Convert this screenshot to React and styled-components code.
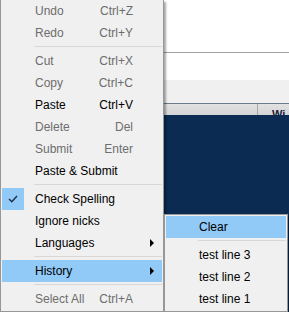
import React from 'react';
import styled, { createGlobalStyle } from 'styled-components';

const Global = createGlobalStyle`
  html, body {
    margin: 0;
    padding: 0;
    width: 289px;
    height: 312px;
    overflow: hidden;
    background: #fff;
  }
`;

// window behind the popup menus
const Window = styled.div`
  position: relative;
  width: 289px;
  height: 312px;
  display: flex;
  flex-direction: column;
  font-family: 'Segoe UI', 'Liberation Sans', Arial, sans-serif;
  font-size: 12px;
  overflow: hidden;
`;

const Pane = styled.div`
  height: ${(p) => p.h}px;
  background: #fff;
  border-bottom: ${(p) => (p.line ? '1px solid #a0a0a0' : 'none')};
  flex-shrink: 0;
`;

const ToolBar = styled.div`
  height: 23px;
  background: #f0f0f0;
  flex-shrink: 0;
`;

const TabStrip = styled.div`
  height: 11px;
  border-top: 1px solid #6c7c8c;
  background: linear-gradient(#e2e2e2, #d4d4d4);
  display: flex;
  justify-content: flex-end;
  overflow: hidden;
  flex-shrink: 0;
`;

const Tab = styled.div`
  width: 32px;
  border-left: 1px solid #a8a8a8;
  padding-left: 14px;
  box-sizing: border-box;
  font-weight: bold;
  font-size: 11px;
  line-height: 20px;
  color: #1a1a3a;
`;

const Content = styled.div`
  flex: 1;
  background: #0b2b52;
`;

// popup menus
const Menu = styled.div`
  position: absolute;
  left: ${(p) => p.x}px;
  top: ${(p) => p.y}px;
  width: ${(p) => p.w}px;
  box-sizing: border-box;
  background: #f0f0f0;
  border: 1px solid #979797;
  border-top: ${(p) => (p.cut ? 'none' : '1px solid #979797')};
  padding: ${(p) => (p.cut ? '0 1px 1px' : '1px')};
  box-shadow: 2px 2px 2px rgba(0, 0, 0, 0.35);
`;

const Item = styled.div`
  height: 22px;
  display: grid;
  grid-template-columns: 22px 1fr auto ${(p) => (p.sub ? '0px' : '29px')};
  align-items: center;
  color: ${(p) => (p.disabled ? '#6d6d6d' : '#000')};
  background: ${(p) => (p.active ? '#91c9f7' : 'transparent')};
  white-space: nowrap;
`;

const CheckCell = styled.div`
  height: 22px;
  display: flex;
  align-items: center;
  justify-content: center;
  background: ${(p) => (p.on ? '#91c9f7' : 'transparent')};
`;

const Label = styled.span`
  padding-left: 11px;
`;

const Shortcut = styled.span`
  text-align: right;
`;

const ArrowCell = styled.div`
  display: flex;
  align-items: center;
  padding-left: 17px;
`;

const Arrow = styled.span`
  width: 0;
  height: 0;
  border-top: 4px solid transparent;
  border-bottom: 4px solid transparent;
  border-left: 4px solid #000;
`;

const Sep = styled.div`
  height: 6px;
  margin-left: 32px;
  display: flex;
  flex-direction: column;

  &::before {
    content: '';
    margin-top: 2px;
    height: 1px;
    background: #d7d7d7;
  }
`;

const Check = () => (
  <svg width="10" height="8" viewBox="0 0 10 8">
    <path d="M1 4 L3.8 6.8 L9 1" fill="none" stroke="#1e2e3e" strokeWidth="1.4" />
  </svg>
);

const MenuItem = ({ label, shortcut, disabled, active, checked, arrow, sub }) => (
  <Item disabled={disabled} active={active} sub={sub}>
    <CheckCell on={checked}>{checked && <Check />}</CheckCell>
    <Label>{label}</Label>
    <Shortcut>{shortcut}</Shortcut>
    {!sub && <ArrowCell>{arrow && <Arrow />}</ArrowCell>}
  </Item>
);

export default function App() {
  return (
    <>
      <Global />
      <Window>
        <Pane h={52} line />
        <Pane h={27} />
        <ToolBar />
        <TabStrip>
          <Tab>Wi</Tab>
        </TabStrip>
        <Content />

        <Menu x={0} y={0} w={164} cut>
          <MenuItem label="Undo" shortcut="Ctrl+Z" disabled />
          <MenuItem label="Redo" shortcut="Ctrl+Y" disabled />
          <Sep />
          <MenuItem label="Cut" shortcut="Ctrl+X" disabled />
          <MenuItem label="Copy" shortcut="Ctrl+C" disabled />
          <MenuItem label="Paste" shortcut="Ctrl+V" />
          <MenuItem label="Delete" shortcut="Del" disabled />
          <MenuItem label="Submit" shortcut="Enter" disabled />
          <MenuItem label="Paste & Submit" />
          <Sep />
          <MenuItem label="Check Spelling" checked />
          <MenuItem label="Ignore nicks" />
          <MenuItem label="Languages" arrow />
          <Sep />
          <MenuItem label="History" arrow active />
          <Sep />
          <MenuItem label="Select All" shortcut="Ctrl+A" disabled />
        </Menu>

        <Menu x={164} y={214} w={124}>
          <MenuItem label="Clear" active sub />
          <Sep />
          <MenuItem label="test line 3" sub />
          <MenuItem label="test line 2" sub />
          <MenuItem label="test line 1" sub />
        </Menu>
      </Window>
    </>
  );
}
